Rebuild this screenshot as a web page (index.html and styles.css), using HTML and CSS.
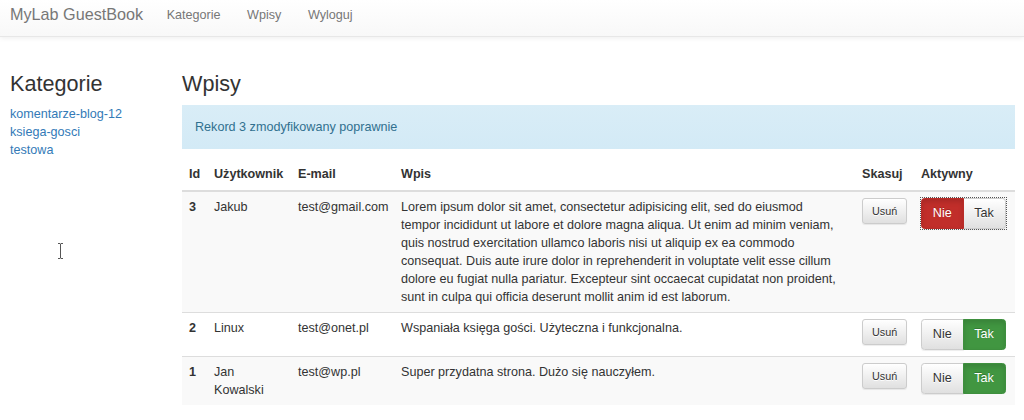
FILE: index.html
```html
<!DOCTYPE html>
<html lang="pl">
<head>
<meta charset="utf-8">
<title>MyLab GuestBook</title>
<link rel="stylesheet" href="styles.css">
</head>
<body>
<nav class="navbar">
  <a class="brand" href="#">MyLab GuestBook</a>
  <ul class="nav">
    <li><a href="#">Kategorie</a></li>
    <li><a href="#">Wpisy</a></li>
    <li><a href="#">Wyloguj</a></li>
  </ul>
</nav>
<div class="page">
  <aside class="side">
    <h3 class="title">Kategorie</h3>
    <ul class="cats">
      <li><a href="#">komentarze-blog-12</a></li>
      <li><a href="#">ksiega-gosci</a></li>
      <li><a href="#">testowa</a></li>
    </ul>
  </aside>
  <main class="main">
    <h3 class="title">Wpisy</h3>
    <div class="alert">Rekord 3 zmodyfikowany poprawnie</div>
    <table class="grid">
      <colgroup>
        <col class="c-id"><col class="c-user"><col class="c-mail"><col class="c-text"><col class="c-del"><col class="c-act">
      </colgroup>
      <thead>
        <tr><th>Id</th><th>Użytkownik</th><th>E-mail</th><th>Wpis</th><th>Skasuj</th><th>Aktywny</th></tr>
      </thead>
      <tbody>
        <tr class="odd">
          <td class="num">3</td>
          <td>Jakub</td>
          <td>test@gmail.com</td>
          <td class="text">Lorem ipsum dolor sit amet, consectetur adipisicing elit, sed do eiusmod tempor incididunt ut labore et dolore magna aliqua. Ut enim ad minim veniam, quis nostrud exercitation ullamco laboris nisi ut aliquip ex ea commodo consequat. Duis aute irure dolor in reprehenderit in voluptate velit esse cillum dolore eu fugiat nulla pariatur. Excepteur sint occaecat cupidatat non proident, sunt in culpa qui officia deserunt mollit anim id est laborum.</td>
          <td><button class="btn btn-sm">Usuń</button></td>
          <td><div class="group focus"><button class="btn danger">Nie</button><button class="btn">Tak</button></div></td>
        </tr>
        <tr>
          <td class="num">2</td>
          <td>Linux</td>
          <td>test@onet.pl</td>
          <td class="text">Wspaniała księga gości. Użyteczna i funkcjonalna.</td>
          <td><button class="btn btn-sm">Usuń</button></td>
          <td><div class="group"><button class="btn">Nie</button><button class="btn success">Tak</button></div></td>
        </tr>
        <tr class="odd">
          <td class="num">1</td>
          <td>Jan Kowalski</td>
          <td>test@wp.pl</td>
          <td class="text">Super przydatna strona. Dużo się nauczyłem.</td>
          <td><button class="btn btn-sm">Usuń</button></td>
          <td><div class="group"><button class="btn">Nie</button><button class="btn success">Tak</button></div></td>
        </tr>
      </tbody>
    </table>
  </main>
</div>
<svg class="cursor" width="9" height="18" viewBox="0 0 9 18" aria-hidden="true">
  <path d="M1.5 1.5 H3.5 M5.5 1.5 H7.5 M4.5 2 V16 M1.5 16.5 H3.5 M5.5 16.5 H7.5" stroke="#fff" stroke-width="3" fill="none" stroke-linecap="round"/>
  <path d="M2 1.5 H4 L4.5 2 L5 1.5 H7 M4.5 2 V16 M2 16.5 H4 L4.5 16 L5 16.5 H7" stroke="#555" stroke-width="1" fill="none"/>
</svg>
</body>
</html>
```

FILE: styles.css
```css
html, body {
  margin: 0;
  padding: 0;
}
body {
  font-family: "Liberation Sans", Arial, sans-serif;
  font-size: 12.6px;
  line-height: 18px;
  color: #333;
  background: #fff;
  position: relative;
  min-height: 420px;
}
a {
  text-decoration: none;
}

/* navbar */
.navbar {
  display: flex;
  align-items: flex-start;
  padding-top: 5px;
  box-sizing: border-box;
  height: 37px;
  background: linear-gradient(to bottom, #ffffff 0%, #f8f8f8 100%);
  border-bottom: 1px solid #e7e7e7;
  box-shadow: inset 0 1px 0 rgba(255,255,255,.15), 0 1px 5px rgba(0,0,0,.075);
}
.brand {
  font-size: 16.2px;
  line-height: 18px;
  color: #777;
  padding: 0 10px 0 10px;
}
.nav {
  display: flex;
  list-style: none;
  margin: 0;
  padding: 0;
}
.nav a {
  display: block;
  padding: 1px 13px 0 13.5px;
  color: #777;
  line-height: 18px;
}

/* page */
.page {
  display: flex;
  padding: 35px 0 0 10px;
}
.side {
  width: 172px;
  flex: none;
}
.main {
  width: 833px;
  flex: none;
}
.title {
  margin: 0 0 9px;
  font-size: 21.6px;
  line-height: 24px;
  font-weight: normal;
  color: #333;
}
.cats {
  list-style: none;
  margin: 0;
  padding: 0;
}
.cats a {
  color: #337ab7;
}

.alert {
  background: linear-gradient(to bottom, #d9edf7 0%, #d3eaf6 100%);
  color: #31708f;
  padding: 13px 13px;
  margin-bottom: 9px;
}

/* table */
.grid {
  width: 833px;
  border-collapse: collapse;
  border-spacing: 0;
  table-layout: fixed;
}
.c-id { width: 25px; }
.c-user { width: 84px; }
.c-mail { width: 103px; }
.c-text { width: 461px; }
.c-del { width: 59px; }
.c-act { width: 101px; }

.grid th {
  text-align: left;
  font-weight: bold;
  padding: 7px 7px;
  border-bottom: 2px solid #ddd;
  vertical-align: bottom;
}
.grid td {
  padding: 6px 7px;
  border-top: 1px solid #ddd;
  vertical-align: top;
}
.grid tbody tr:first-child td {
  border-top: 0;
}
.grid td.text {
  padding-right: 14px;
}
.grid td.num {
  font-weight: bold;
}
.grid tr.odd td {
  background: #f9f9f9;
}

/* buttons */
.btn {
  font-family: "Liberation Sans", Arial, sans-serif;
  font-size: 12.6px;
  line-height: 18px;
  padding: 5.4px 10.8px;
  margin: 0;
  color: #333;
  border: 1px solid #ccc;
  border-radius: 3.5px;
  background: linear-gradient(to bottom, #ffffff 0%, #e0e0e0 100%);
  text-shadow: 0 1px 0 #fff;
  box-shadow: inset 0 1px 0 rgba(255,255,255,.15), 0 1px 1px rgba(0,0,0,.075);
  cursor: pointer;
  display: inline-block;
  vertical-align: top;
}
.btn-sm {
  font-size: 10.8px;
  line-height: 16px;
  padding: 4px 9px;
  border-radius: 3px;
}
.group {
  display: inline-flex;
}
.group .btn:first-child {
  border-top-right-radius: 0;
  border-bottom-right-radius: 0;
}
.group .btn:last-child {
  border-top-left-radius: 0;
  border-bottom-left-radius: 0;
  margin-left: -1px;
}
.group.focus {
  outline: 1px dotted #555;
  outline-offset: 0;
}
.btn.danger {
  background: #c12e2a;
  border-color: #b92c28;
  color: #fff;
  text-shadow: 0 -1px 0 rgba(0,0,0,.2);
  box-shadow: inset 0 3px 5px rgba(0,0,0,.125);
  position: relative;
  z-index: 1;
}
.btn.success {
  background: #419641;
  border-color: #3e8f3e;
  color: #fff;
  text-shadow: 0 -1px 0 rgba(0,0,0,.2);
  box-shadow: inset 0 3px 5px rgba(0,0,0,.125);
  position: relative;
  z-index: 1;
}

/* mouse cursor overlay */
.cursor {
  position: absolute;
  left: 56px;
  top: 242px;
}
```
